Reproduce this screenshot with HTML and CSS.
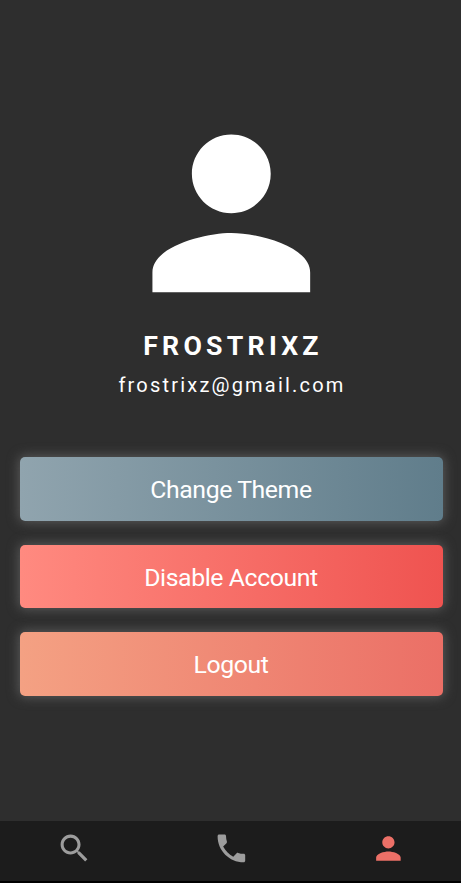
FILE: index.html
```html
<!DOCTYPE html>
<html lang="en">
<head>
<meta charset="utf-8">
<title>Profile</title>
<link rel="stylesheet" href="styles.css">
</head>
<body>
<div class="screen">
  <main class="profile">
    <svg class="avatar" viewBox="0 0 24 24"><path d="M12 12c2.21 0 4-1.79 4-4s-1.79-4-4-4-4 1.79-4 4 1.79 4 4 4zm0 2c-2.67 0-8 1.34-8 4v2h16v-2c0-2.66-5.33-4-8-4z"/></svg>
    <h1 class="name">FROSTRIXZ</h1>
    <p class="email">frostrixz@gmail.com</p>
    <div class="actions">
      <button class="action theme">Change Theme</button>
      <button class="action disable">Disable Account</button>
      <button class="action logout">Logout</button>
    </div>
  </main>
  <nav class="tabs">
    <svg class="tab" viewBox="0 0 24 24"><path d="M15.5 14h-.79l-.28-.27C15.41 12.59 16 11.11 16 9.5 16 5.91 13.09 3 9.5 3S3 5.91 3 9.5 5.91 16 9.5 16c1.61 0 3.09-.59 4.23-1.57l.27.28v.79l5 4.99L20.49 19l-4.99-5zm-6 0C7.01 14 5 11.99 5 9.5S7.01 5 9.5 5 14 7.01 14 9.5 11.99 14 9.5 14z"/></svg>
    <svg class="tab" viewBox="0 0 24 24"><path d="M6.62 10.79c1.44 2.83 3.76 5.14 6.59 6.59l2.2-2.2c.27-.27.67-.36 1.02-.24 1.12.37 2.33.57 3.57.57.55 0 1 .45 1 1V20c0 .55-.45 1-1 1-9.39 0-17-7.61-17-17 0-.55.45-1 1-1h3.5c.55 0 1 .45 1 1 0 1.25.2 2.45.57 3.57.11.35.03.74-.25 1.02l-2.2 2.2z"/></svg>
    <svg class="tab active" viewBox="0 0 24 24"><path d="M12 12c2.21 0 4-1.79 4-4s-1.79-4-4-4-4 1.79-4 4 1.79 4 4 4zm0 2c-2.67 0-8 1.34-8 4v2h16v-2c0-2.66-5.33-4-8-4z"/></svg>
  </nav>
</div>
</body>
</html>
```
FILE: styles.css
```css
* { box-sizing: border-box; }
body { margin: 0; background: #2e2e2e; color: #fff; font-family: Roboto, sans-serif; }
.screen { height: 883px; display: flex; flex-direction: column; overflow: hidden; }
.profile { flex: 1; display: flex; flex-direction: column; align-items: center; padding-top: 94.7px; }
.avatar { width: 236.6px; height: 236.6px; margin-left: 1.4px; fill: #fff; flex: none; }
.name { margin: 0; height: 31px; line-height: 31px; font-size: 26.7px; font-weight: 700; letter-spacing: 4.25px; white-space: nowrap; padding-left: 5px; }
.email { margin: 11px 0 0; height: 24px; line-height: 24px; font-size: 20px; letter-spacing: 2.2px; white-space: nowrap; padding-left: 3px; }
.actions { align-self: stretch; margin: 60px 18.5px 0 19.5px; display: flex; flex-direction: column; gap: 24px; }
.action { height: 63.5px; padding: 1px 0 0; border: 0; border-radius: 5px; color: #fff; font: 400 24.8px/29px Roboto, sans-serif; letter-spacing: -0.4px; box-shadow: 0 0 12px 1px #5c5c5c; }
.theme { background: linear-gradient(90deg, #90a4ae, #607d8b); }
.disable { background: linear-gradient(90deg, #ff8a80, #ef5350); }
.logout { background: linear-gradient(90deg, #f4a183, #eb6f66); }
.tabs { flex: none; height: 62px; padding: 9px 0 0 1.4px; background: #1c1c1c; border-bottom: 2px solid #000; display: grid; grid-template-columns: repeat(3, 157px); justify-content: center; justify-items: center; }
.tab { width: 36.8px; height: 36.8px; fill: #9d9d9d; }
.active { fill: #ec7067; }
```
